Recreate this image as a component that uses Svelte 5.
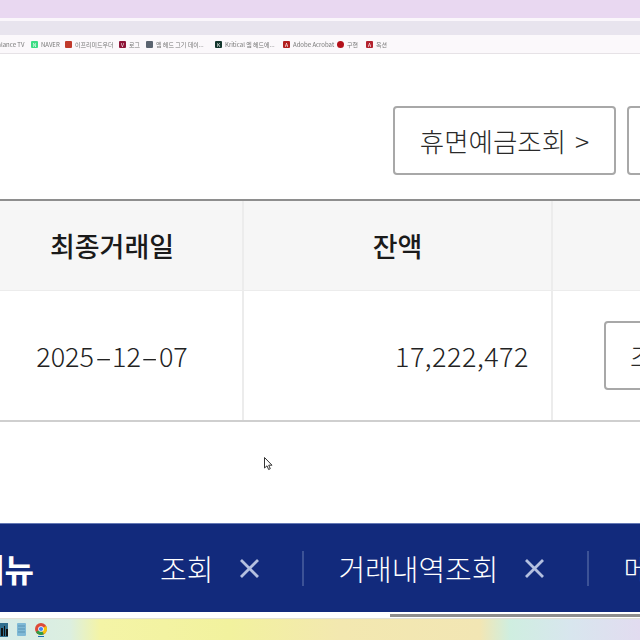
<script>
    const bookmarks = [
        { label: 'balance TV', w: 37 },
        { label: 'NAVER', color: '#3ddc84', glyph: 'N', w: 34 },
        { label: '이프리미드우더', color: '#c0392b', glyph: '', w: 54 },
        { label: '로그', color: '#8e1538', glyph: 'V', w: 27 },
        { label: '엠 헤드 그기 데이...', color: '#5b6470', glyph: '', w: 69 },
        { label: 'Kritical 엠 헤드에...', color: '#12352c', glyph: 'K', w: 68 },
        { label: 'Adobe Acrobat', color: '#b3201f', glyph: 'A', w: 54 },
        { label: '구현', color: '#b3101a', glyph: '', round: true, w: 29 },
        { label: '옥션', color: '#b4232f', glyph: 'A', w: 24 }
    ];

    const tabs = ['조회', '거래내역조회'];
</script>

<style>
    :global(body) {
        margin: 0;
        overflow: hidden;
    }

    .screen {
        width: 640px;
        height: 640px;
        overflow: hidden;
        display: flex;
        flex-direction: column;
        background: #fff;
        font-family: "Noto Sans CJK KR", "Noto Sans", sans-serif;
        color: #222;
    }

    .titlebar {
        height: 18px;
        background: #e9d8f1;
        border-bottom: 3px solid #faf6fb;
    }

    .addressbar {
        height: 14px;
        background: #e8e4ee;
    }

    .bookmarks {
        height: 18px;
        flex: none;
        display: flex;
        align-items: center;
        margin-left: -6px;
        background: #fbf8fb;
        border-bottom: 1px solid #e6e2e6;
        font-size: 6px;
        color: #777;
        white-space: nowrap;
        overflow: hidden;
    }

    .bookmark {
        display: flex;
        align-items: center;
        gap: 3px;
        flex: none;
        filter: blur(0.3px);
    }

    .favicon {
        width: 7px;
        height: 7px;
        border-radius: 1px;
        color: #fff;
        font-size: 5px;
        line-height: 7px;
        text-align: center;
    }

    .favicon.round {
        border-radius: 50%;
    }

    .content {
        flex: 1;
        display: flex;
        flex-direction: column;
    }

    .actions {
        display: flex;
        gap: 11px;
        padding: 52px 0 24px 393px;
        height: 69px;
    }

    .btn {
        flex: none;
        box-sizing: border-box;
        background: #fff;
        border: 2px solid #a8a8a8;
        border-radius: 4px;
        font: inherit;
        color: #2a2a2a;
        font-size: 26.5px;
        font-weight: 300;
        white-space: nowrap;
    }

    .btn.wide {
        width: 223px;
        height: 69px;
        padding: 0;
        word-spacing: 3px;
    }

    .btn.next {
        width: 60px;
        height: 69px;
    }

    .table {
        width: 760px;
        margin-left: -18px;
        display: grid;
        grid-template-columns: 260px 2px 307px 2px 189px;
        grid-template-rows: 90px 129px;
        border-top: 2px solid #8e8e8e;
        border-bottom: 2px solid #cfcfcf;
    }

    .cell {
        display: flex;
        align-items: center;
        justify-content: center;
        font-size: 27px;
        font-weight: 300;
        color: #222;
    }

    .head {
        background: #f6f6f6;
        font-weight: 500;
        color: #1a1a1a;
        border-bottom: 1px solid #ececec;
    }

    .sep {
        background: #ececec;
    }

    .dash {
        display: inline-block;
        margin: 0 4.5px;
        transform: scaleX(1.9);
    }

    .amount {
        justify-content: flex-end;
        padding-right: 22px;
        letter-spacing: 0.5px;
    }

    .row-action {
        justify-content: flex-start;
        padding-left: 51px;
    }

    .btn.inspect {
        width: 90px;
        height: 69px;
        text-align: left;
        padding: 0 0 0 24px;
    }

    .spacer {
        flex: 1;
    }

    .footer {
        flex: none;
        height: 89px;
        display: flex;
        align-items: center;
        background: #122a7c;
        border-top: 1px solid #6478b4;
        box-sizing: border-box;
        color: #fff;
        white-space: nowrap;
        overflow: hidden;
    }

    .menu-title {
        flex: none;
        width: 185px;
        margin-left: -25px;
        font-size: 32px;
        font-weight: 700;
    }

    .tab {
        flex: none;
        display: flex;
        align-items: center;
        font-size: 29px;
        font-weight: 300;
    }

    .close {
        margin-left: 26px;
        width: 21px;
        height: 21px;
        display: block;
    }

    .divider {
        flex: none;
        width: 2px;
        height: 35px;
        margin: 0 34px 0 42px;
        background: #3c5296;
    }

    .scrollbar {
        flex: none;
        height: 6px;
        background: #fff;
        padding: 2px 0 1px 390px;
        box-sizing: border-box;
    }

    .thumb {
        height: 3px;
        background: #8e8e8e;
    }

    .taskbar {
        flex: none;
        height: 22px;
        display: flex;
        align-items: center;
        gap: 9px;
        border-top: 1px solid #e0e0d8;
        box-sizing: border-box;
        background: linear-gradient(90deg, #d6ebe8 0, #dcefe0 70px, #f4f4a6 100px, #f2f29e 230px, #f3e8b0 340px, #f2e6b4 480px, #cfeee0 510px, #d8e6ee 570px, #e2dcf0 640px);
    }

    .task-icon {
        display: block;
        flex: none;
    }
</style>

<div class="screen">
    <div class="titlebar"></div>
    <div class="addressbar"></div>
    <div class="bookmarks">
        {#each bookmarks as b}
            <span class="bookmark" style="width: {b.w}px">
                {#if b.color}
                    <span class="favicon" class:round={b.round} style="background: {b.color}">{b.glyph}</span>
                {/if}
                {b.label}
            </span>
        {/each}
    </div>

    <div class="content">
        <div class="actions">
            <button class="btn wide">휴면예금조회 &gt;</button>
            <button class="btn next"></button>
        </div>

        <div class="table">
            <div class="cell head">최종거래일</div>
            <div class="sep"></div>
            <div class="cell head">잔액</div>
            <div class="sep"></div>
            <div class="cell head"></div>

            <div class="cell"><span>2025<span class="dash">-</span>12<span class="dash">-</span>07</span></div>
            <div class="sep"></div>
            <div class="cell amount">17,222,472</div>
            <div class="sep"></div>
            <div class="cell row-action"><button class="btn inspect">조회</button></div>
        </div>
        <div class="spacer"></div>
    </div>

    <div class="footer">
        <div class="menu-title">메뉴</div>
        {#each tabs as tab}
            <div class="tab">
                {tab}
                <svg class="close" viewBox="0 0 21 21" fill="none" stroke="#b4c0e0" stroke-width="2.8">
                    <path d="M2 2 19 19M19 2 2 19" />
                </svg>
            </div>
            <div class="divider"></div>
        {/each}
        <div class="tab">메뉴</div>
    </div>
    <div class="scrollbar"><div class="thumb"></div></div>
    <div class="taskbar">
        <svg class="task-icon" width="8" height="14" viewBox="0 0 8 14">
            <rect width="8" height="14" fill="#2f6f8f" />
            <path d="M1 5h2v8H1zM4 3h1v10H4zM6 6h2v7H6z" fill="#111" />
        </svg>
        <svg class="task-icon" width="9" height="13" viewBox="0 0 9 13">
            <rect width="9" height="13" rx="1" fill="#7fb9d6" />
            <path d="M1 3h7M1 6h7M1 9h7" stroke="#5a93b3" />
        </svg>
        <svg class="task-icon" width="12" height="14" viewBox="0 0 12 14">
            <circle cx="6" cy="6" r="6" fill="#dd4b39" />
            <path d="M6 6 0.8 9A6 6 0 0 0 9 11.2Z" fill="#2f9e44" />
            <path d="M6 6 9 11.2A6 6 0 0 0 11.2 3Z" fill="#f4c20d" />
            <circle cx="6" cy="6" r="2.8" fill="#fff" />
            <circle cx="6" cy="6" r="2.1" fill="#4285f4" />
            <rect x="3" y="13" width="6" height="1" fill="#1a6fb5" />
        </svg>
    </div>
</div>

<svg class="cursor" width="9" height="14" viewBox="0 0 9 14" style="position: absolute; left: 264px; top: 457px">
    <path d="M.5.5V11L3 8.8 4.6 12.5 6.3 11.7 4.7 8.2H8Z" fill="#fff" stroke="#333" />
</svg>
